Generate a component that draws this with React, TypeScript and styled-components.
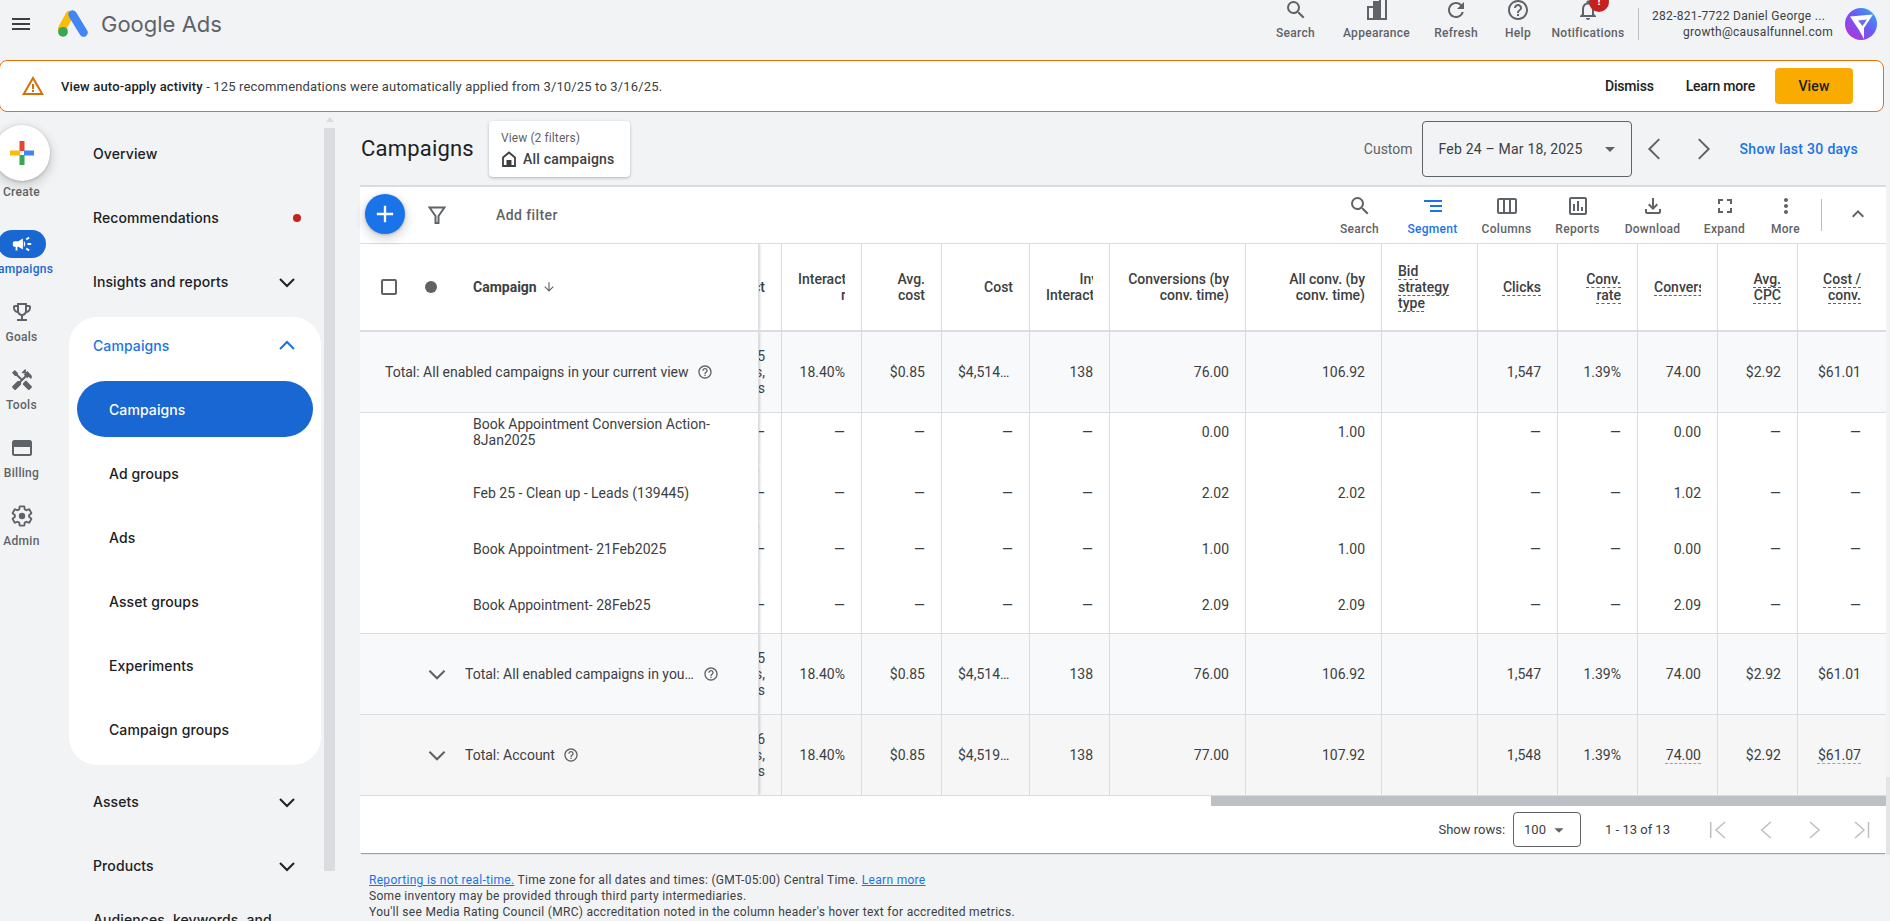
import React from "react";
import styled, { createGlobalStyle } from "styled-components";
import {
  MdMenu, MdSearch, MdRefresh, MdHelpOutline, MdNotificationsNone, MdWarningAmber, MdCampaign,
  MdOutlineEmojiEvents, MdHandyman, MdArrowDropDown, MdAdd,
  MdSegment, MdOutlineViewWeek, MdOutlineAssessment, MdOutlineFileDownload, MdFullscreen, MdMoreVert,
  MdKeyboardArrowUp, MdArrowDownward,
} from "react-icons/md";

const Global = createGlobalStyle`
  html, body { margin: 0; padding: 0; background: #f1f3f4; overflow: hidden; }
  body { font-family: Roboto, "Liberation Sans", sans-serif; color: #3c4043; }
  * { box-sizing: border-box; }
`;

const Page = styled.div`
  position: relative;
  width: 1890px;
  height: 921px;
  overflow: hidden;
  display: flex;
  flex-direction: column;
`;
const PageScrollThumb = styled.div`
  position: absolute;
  right: 0;
  top: 777px;
  width: 4px;
  height: 78px;
  background: #e3e5e8;
`;

/* ---- top bar ---- */
const TopBar = styled.header`
  height: 60px;
  flex: none;
  display: flex;
  padding-left: 9px;
  color: #5f6368;
`;
const Burger = styled.div`
  height: 48px;
  display: flex;
  align-items: center;
  color: #3c4043;
`;
const Logo = styled.svg`
  margin: 10px 0 0 25px;
  width: 30px;
  height: 27px;
`;
const Brand = styled.div`
  margin-left: 13px;
  height: 48px;
  font: 400 22px/48px Inter, Roboto, sans-serif;
  color: #5f6368;
`;
const TopActions = styled.div`
  margin-left: auto;
  margin-top: -2px;
  display: flex;
`;
const TopAction = styled.div<{ $w: number }>`
  position: relative;
  width: ${(p) => p.$w}px;
  display: flex;
  flex-direction: column;
  align-items: center;
  color: #5f6368;
`;
const TopLabel = styled.span`
  margin-top: 3px;
  font-size: 12px;
  font-weight: 500;
  line-height: 16px;
  letter-spacing: 0.3px;
`;
const Badge = styled.span`
  position: absolute;
  left: 46px;
  top: -6px;
  width: 20px;
  height: 20px;
  border-radius: 50%;
  background: #c5221f;
  color: #fff;
  font-size: 11px;
  font-weight: 700;
  text-align: center;
  line-height: 20px;
`;
const VDivider = styled.div<{ $h: number }>`
  width: 1px;
  height: ${(p) => p.$h}px;
  background: #bdc1c6;
  flex: none;
`;
const TopDivider = styled(VDivider)`
  margin: 8px 0 0 5px;
`;
const Account = styled.div`
  margin-left: 13px;
  width: 181px;
  padding-top: 8px;
  font-size: 12px;
  line-height: 16px;
  letter-spacing: 0.3px;
  white-space: nowrap;
  text-align: right;
  color: #3c4043;
`;
const AccountName = styled.div`
  padding-right: 9px;
`;
const Avatar = styled.svg`
  margin: 8px 13px 0 12px;
  width: 32px;
  height: 32px;
  flex: none;
`;

/* ---- banner ---- */
const Banner = styled.section`
  flex: none;
  width: 1885px;
  margin-left: -1px;
  height: 52px;
  background: #fff;
  border: 1px solid #e8710a;
  border-radius: 8px;
  display: flex;
  align-items: center;
  padding: 0 30px 0 21px;
  font-size: 13px;
  letter-spacing: 0.15px;
  color: #3c4043;
`;
const BannerIcon = styled.span`
  display: flex;
  color: #d56e0c;
  margin-right: 16px;
`;
const BannerText = styled.span`
  b { font-weight: 500; color: #202124; }
`;
const BannerBtn = styled.span`
  font-size: 14px;
  font-weight: 500;
  letter-spacing: -0.2px;
  color: #202124;
`;
const BannerActions = styled.div`
  margin-left: auto;
  display: flex;
  align-items: center;
  gap: 32px;
`;
const ViewBtn = styled.span`
  width: 78px;
  height: 36px;
  margin-left: -12px;
  border-radius: 4px;
  background: #f9ab00;
  display: flex;
  align-items: center;
  justify-content: center;
  font-size: 14px;
  font-weight: 500;
  color: #202124;
`;

/* ---- body ---- */
const Body = styled.div`
  display: flex;
  flex: 1;
  min-height: 0;
`;
const Rail = styled.nav`
  width: 43px;
  flex: none;
  padding-top: 13px;
  display: flex;
  flex-direction: column;
  align-items: center;
`;
const CreateBtn = styled.div`
  width: 56px;
  height: 56px;
  flex: none;
  border-radius: 50%;
  background: #fff;
  box-shadow: 0 1px 3px rgba(60, 64, 67, 0.3), 0 4px 8px 3px rgba(60, 64, 67, 0.15);
  display: flex;
  align-items: center;
  justify-content: center;
`;
const RailLabel = styled.span<{ $active?: boolean }>`
  font-size: 12px;
  line-height: 16px;
  font-weight: 500;
  letter-spacing: 0.3px;
  white-space: nowrap;
  color: ${(p) => (p.$active ? "#1967d2" : "#5f6368")};
`;
const CreateLabel = styled(RailLabel)`
  margin: 3px 0 30px;
`;
const RailItem = styled.div`
  display: flex;
  flex-direction: column;
  align-items: center;
  height: 68px;
  flex: none;
`;
const RailIcon = styled.div<{ $active?: boolean }>`
  width: 48px;
  height: 28px;
  margin-bottom: 3px;
  flex: none;
  border-radius: 14px;
  display: flex;
  align-items: center;
  justify-content: center;
  color: ${(p) => (p.$active ? "#fff" : "#5f6368")};
  background: ${(p) => (p.$active ? "#1967d2" : "transparent")};
`;
const SecNav = styled.nav`
  margin-left: 26px;
  width: 252px;
  flex: none;
  padding-top: 13px;
  display: flex;
  flex-direction: column;
  gap: 8px;
`;
const NavItem = styled.div<{ $sub?: boolean; $active?: boolean; $blue?: boolean }>`
  height: 56px;
  flex: none;
  display: flex;
  align-items: center;
  justify-content: space-between;
  padding: 1px 22px 0 ${(p) => (p.$sub ? "32px" : "24px")};
  border-radius: 28px;
  font: 500 14px/20px Inter, Roboto, sans-serif;
  letter-spacing: 0.1px;
  color: ${(p) => (p.$active ? "#fff" : p.$blue ? "#1a73e8" : "#202124")};
  background: ${(p) => (p.$active ? "#1967d2" : "transparent")};
`;
const NavCard = styled.div`
  background: #fff;
  border-radius: 28px;
  padding-bottom: 8px;
  display: flex;
  flex-direction: column;
  gap: 8px;
  flex: none;
`;
const NavSubList = styled.div`
  display: flex;
  flex-direction: column;
  gap: 8px;
  padding: 0 8px;
`;
const RedDot = styled.span`
  width: 8px;
  height: 8px;
  border-radius: 50%;
  background: #c5221f;
  margin-right: -2px;
`;
const NavScroll = styled.div`
  margin-left: 3px;
  width: 11px;
  flex: none;
  padding-top: 5px;
  display: flex;
  flex-direction: column;
  align-items: center;
`;
const NavArrow = styled.div`
  width: 0;
  height: 0;
  border-left: 4px solid transparent;
  border-right: 4px solid transparent;
  border-bottom: 5px solid #dadce0;
`;
const NavThumb = styled.div`
  margin-top: 6px;
  width: 11px;
  height: 743px;
  background: #dadce0;
`;

/* ---- main ---- */
const Main = styled.main`
  margin-left: 25px;
  width: 1526px;
  flex: none;
`;
const MainHead = styled.div`
  height: 73px;
  padding-top: 9px;
  display: flex;
  align-items: flex-start;
`;
const Title = styled.h1`
  margin: 0 0 0 1px;
  width: 112px;
  height: 56px;
  line-height: 56px;
  font-size: 22px;
  letter-spacing: 0.2px;
  font-weight: 400;
  white-space: nowrap;
  color: #202124;
`;
const ViewCard = styled.div`
  margin-left: 16px;
  width: 141px;
  height: 56px;
  padding: 9px 12px;
  background: #fff;
  border-radius: 4px;
  box-shadow: 0 1px 3px rgba(60, 64, 67, 0.35);
`;
const ViewCardTop = styled.div`
  font-size: 12px;
  line-height: 16px;
  letter-spacing: 0.1px;
  color: #5f6368;
`;
const ViewCardBottom = styled.div`
  margin-top: 4px;
  display: flex;
  align-items: center;
  gap: 6px;
  font-size: 14px;
  line-height: 18px;
  letter-spacing: 0.2px;
  font-weight: 500;
  color: #3c4043;
`;
const DateArea = styled.div`
  margin-left: auto;
  display: flex;
  align-items: center;
  height: 56px;
`;
const Custom = styled.span`
  font-size: 14px;
  color: #5f6368;
`;
const DateBox = styled.div`
  margin-left: 9px;
  width: 210px;
  height: 56px;
  border: 1px solid #5f6368;
  border-radius: 4px;
  display: flex;
  align-items: center;
  justify-content: space-between;
  padding: 0 9px 0 16px;
  font-size: 14px;
  letter-spacing: 0.2px;
  color: #3c4043;
`;
const NavBtn = styled.div`
  width: 48px;
  display: flex;
  justify-content: center;
  color: #5f6368;
`;
const DatePager = styled.div`
  display: flex;
  margin: 0 1px 0 -1px;
`;
const ShowLast = styled.span`
  margin: 0 28px 0 12px;
  font-size: 14px;
  font-weight: 500;
  letter-spacing: 0.3px;
  color: #1a73e8;
`;

const Card = styled.section`
  background: #fff;
  border-top: 2px solid #dadce0;
  box-shadow: 0 2px 1px -1px rgba(60, 64, 67, 0.45);
`;
const Toolbar = styled.div`
  height: 57px;
  border-bottom: 1px solid #dadce0;
  display: flex;
  align-items: flex-start;
  padding-left: 5px;
`;
const Fab = styled.div`
  margin-top: 7px;
  width: 40px;
  height: 40px;
  position: relative;
  z-index: 2;
  border-radius: 50%;
  background: #1a73e8;
  color: #fff;
  display: flex;
  align-items: center;
  justify-content: center;
  box-shadow: 0 1px 3px rgba(60, 64, 67, 0.3), 0 4px 8px 3px rgba(60, 64, 67, 0.15);
`;
const FilterSvg = styled.svg`
  margin: 19px 0 0 23px;
  width: 18px;
  height: 18px;
`;
const AddFilter = styled.span`
  margin: 19px 0 0 50px;
  font-size: 14px;
  line-height: 18px;
  letter-spacing: 0.4px;
  font-weight: 500;
  color: #5f6368;
`;
const ToolActions = styled.div`
  margin-left: auto;
  display: flex;
  padding-top: 7px;
`;
const ToolAction = styled.div<{ $w: number; $on?: boolean }>`
  width: ${(p) => p.$w}px;
  display: flex;
  flex-direction: column;
  align-items: center;
  color: ${(p) => (p.$on ? "#1a73e8" : "#5f6368")};
`;
const ToolLabel = styled.span`
  margin-top: 3px;
  font-size: 12px;
  line-height: 16px;
  letter-spacing: 0.3px;
  font-weight: 500;
`;
const ToolDivider = styled(VDivider)`
  margin: 12px 0 0 9px;
`;
const Collapse = styled.div`
  margin: 15px 16px 0 24px;
  display: flex;
  color: #5f6368;
`;

/* ---- table ---- */
const COLS = "399px 23px 80px 80px 88px 80px 136px 136px 96px 80px 80px 80px 80px 88px";

const Cell = styled.div<{ $left?: boolean }>`
  min-width: 0;
  display: flex;
  align-items: center;
  justify-content: ${(p) => (p.$left ? "flex-start" : "flex-end")};
  padding: 0 16px;
  border-right: 1px solid #dadce0;
  font-size: 14px;
  line-height: 16px;
  color: #3c4043;
  white-space: nowrap;
  &:last-child { border-right: 0; padding-right: 25px; }
`;
/* the column that has scrolled under the frozen pane: only its right edge shows */
const EdgeCell = styled(Cell)`
  padding-left: 0;
`;
const Row = styled.div<{ $h: number; $bg?: string; $line?: number; $lift?: number }>`
  display: grid;
  grid-template-columns: ${COLS};
  height: ${(p) => p.$h + (p.$line || 0)}px;
  background: ${(p) => p.$bg || "#fff"};
  border-bottom: ${(p) => p.$line || 0}px solid #dadce0;
  & > * { padding-bottom: ${(p) => p.$lift || 0}px; }
`;
const Frozen = styled.div<{ $pl: number; $pr?: number; $gap?: number }>`
  position: relative;
  z-index: 1;
  background: inherit;
  min-width: 0;
  display: flex;
  align-items: center;
  gap: ${(p) => p.$gap || 0}px;
  padding-left: ${(p) => p.$pl}px;
  padding-right: ${(p) => p.$pr || 0}px;
  border-right: 1px solid #dadce0;
  box-shadow: 1px 0 2px rgba(60, 64, 67, 0.22);
  clip-path: inset(0 -4px 0 0);
  font-size: 14px;
  line-height: 16px;
  color: #3c4043;
`;
const HeadRow = styled(Row)`
  ${Cell} { font-weight: 500; }
  ${Frozen} { font-weight: 500; }
`;
const Check = styled.span`
  width: 16px;
  height: 16px;
  border: 2px solid #5f6368;
  border-radius: 2px;
  flex: none;
`;
const Dot = styled.span`
  margin-left: 28px;
  width: 12px;
  height: 12px;
  border-radius: 50%;
  background: #5f6368;
  flex: none;
`;
const HeadName = styled.span`
  margin-left: 36px;
  display: flex;
  align-items: center;
  gap: 5px;
  font-weight: 700;
  color: #3c4043;
`;
const Lines = styled.div`
  text-align: right;
`;
const LeftLines = styled.div`
  text-align: left;
`;
const ClipBox = styled.div`
  width: 100%;
  overflow: hidden;
  padding-bottom: 4px;
  margin-bottom: -4px;
`;
const ClipInner = styled.div`
  width: max-content;
  text-align: right;
`;
const Dashed = styled.span<{ $soft?: boolean }>`
  text-decoration: underline dashed ${(p) => (p.$soft ? "#9aa0a6" : "#5f6368")} 1px;
  text-underline-offset: 3px;
  text-decoration-skip-ink: none;
`;
const Ellipsis = styled.div`
  width: 100%;
  overflow: hidden;
  text-overflow: ellipsis;
`;
const FooterName = styled.span`
  margin: 0 6px 0 15px;
  max-width: 232px;
  overflow: hidden;
  text-overflow: ellipsis;
  white-space: nowrap;
`;
const AccountTotal = styled(FooterName)`
  margin-right: 8px;
`;
const PlainName = styled.span`
  white-space: nowrap;
`;
const HelpIcon = styled.span`
  display: flex;
  color: #5f6368;
  flex: none;
`;
const HScroll = styled.div`
  height: 10px;
  padding-left: 851px;
`;
const HThumb = styled.div`
  height: 10px;
  background: #bdc1c6;
`;
const Footer = styled.div`
  height: 47px;
  display: flex;
  align-items: center;
  justify-content: flex-end;
  font-size: 13px;
  color: #3c4043;
`;
const RowsSelect = styled.div`
  margin-left: 8px;
  width: 68px;
  height: 35px;
  border: 1px solid #5f6368;
  border-radius: 4px;
  padding-left: 10px;
  display: flex;
  align-items: center;
  gap: 2px;
`;
const Range = styled.span`
  margin: 0 24px 0 24px;
`;
const PagerBtn = styled.div`
  width: 48px;
  display: flex;
  justify-content: center;
`;
const Notes = styled.div`
  margin-top: 19px;
  padding-left: 9px;
  font-size: 12px;
  line-height: 16px;
  letter-spacing: 0.3px;
  color: #3c4043;
  white-space: nowrap;
  a { color: #1a73e8; text-decoration: underline; }
`;

/* ---- drawings ---- */
const ROT: Record<string, number> = { down: 0, up: 180, left: 90, right: -90 };
const ChevSvg = styled.svg<{ $dir: string }>`
  flex: none;
  transform: rotate(${(p) => ROT[p.$dir]}deg);
`;
const Chev = ({ dir = "down", size = 24, w = 2, color = "currentColor" }: { dir?: string; size?: number; w?: number; color?: string }) => (
  <ChevSvg $dir={dir} width={size} height={size} viewBox="0 0 24 24">
    <polyline points="5,9 12,16 19,9" fill="none" stroke={color} strokeWidth={w} />
  </ChevSvg>
);
const Help = () => (
  <HelpIcon><MdHelpOutline size={16} /></HelpIcon>
);
const PagerIcon = ({ d, bar }: { d: string; bar?: string }) => (
  <svg width="18" height="20" viewBox="0 0 18 20" fill="none" stroke="#bdc1c6" strokeWidth="1.6">
    <polyline points={d} />
    {bar && <line x1={bar} x2={bar} y1="2" y2="18" />}
  </svg>
);
const BillingIcon = () => (
  <svg width="24" height="24" viewBox="0 0 24 24">
    <rect x="3" y="5" width="18" height="14" rx="1.5" fill="none" stroke="currentColor" strokeWidth="2" />
    <rect x="3" y="6" width="18" height="5" fill="currentColor" />
  </svg>
);
const AdminIcon = () => (
  <svg width="24" height="24" viewBox="0 0 24 24">
    <path
      d="M19.14 12.94c.04-.3.06-.61.06-.94 0-.32-.02-.64-.07-.94l2.03-1.58a.49.49 0 0 0 .12-.61l-1.92-3.32a.488.488 0 0 0-.59-.22l-2.39.96c-.5-.38-1.03-.7-1.62-.94l-.36-2.54a.484.484 0 0 0-.48-.41h-3.84c-.24 0-.43.17-.47.41l-.36 2.54c-.59.24-1.13.57-1.62.94l-2.39-.96c-.22-.08-.47 0-.59.22L2.74 8.87c-.12.21-.08.47.12.61l2.03 1.58c-.05.3-.09.63-.09.94s.02.64.07.94l-2.03 1.58a.49.49 0 0 0-.12.61l1.92 3.32c.12.22.37.29.59.22l2.39-.96c.5.38 1.03.7 1.62.94l.36 2.54c.05.24.24.41.48.41h3.84c.24 0 .44-.17.47-.41l.36-2.54c.59-.24 1.13-.56 1.62-.94l2.39.96c.22.08.47 0 .59-.22l1.92-3.32c.12-.22.07-.47-.12-.61l-2.01-1.58z"
      fill="none"
      stroke="currentColor"
      strokeWidth="1.9"
    />
    <circle cx="12" cy="12" r="3.2" fill="currentColor" />
  </svg>
);

const D = "—";
const totals = ["18.40%", "$0.85", "$4,514.50", "138", "76.00", "106.92", "", "1,547", "1.39%", "74.00", "$2.92", "$61.01"];
const account = ["18.40%", "$0.85", "$4,519.25", "138", "77.00", "107.92", "", "1,548", "1.39%", "74.00", "$2.92", "$61.07"];
const body = [
  { name: "Book Appointment Conversion Action-8Jan2025", h: 52, lift: 14, line: 0, a: "0.00", b: "1.00", c: "0.00" },
  { name: "Feb 25 - Clean up - Leads (139445)", h: 56, lift: 0, line: 0, a: "2.02", b: "2.02", c: "1.02" },
  { name: "Book Appointment- 21Feb2025", h: 55, lift: 0, line: 0, a: "1.00", b: "1.00", c: "0.00" },
  { name: "Book Appointment- 28Feb25", h: 57, lift: 0, line: 1, a: "2.09", b: "2.09", c: "2.09" },
];

const ValueCells = ({ v, clip, soft }: { v: string[]; clip: string; soft?: boolean }) => (
  <>
    <EdgeCell><Lines>{clip}<br />s,<br />s</Lines></EdgeCell>
    {v.map((x, i) => (
      <Cell key={i}>
        {i === 2 ? <Ellipsis>{x}</Ellipsis> : soft && (i === 9 || i === 11) ? <Dashed $soft>{x}</Dashed> : x}
      </Cell>
    ))}
  </>
);

export default function App() {
  return (
    <Page>
      <Global />
      <PageScrollThumb />
      <TopBar>
        <Burger><MdMenu size={24} /></Burger>
        <Logo viewBox="0 0 30 27">
          <path d="M11.5 5 L4 18.6" stroke="#fbbc04" strokeWidth="8" strokeLinecap="round" />
          <path d="M14.5 4.5 L25.6 22.6" stroke="#4285f4" strokeWidth="8.4" strokeLinecap="round" />
          <circle cx="5" cy="21.8" r="4.9" fill="#34a853" />
        </Logo>
        <Brand>Google Ads</Brand>
        <TopActions>
          <TopAction $w={77}><MdSearch size={24} /><TopLabel>Search</TopLabel></TopAction>
          <TopAction $w={85}>
            <svg width="24" height="24" viewBox="0 0 24 24" fill="none" stroke="#5f6368" strokeWidth="2">
              <rect x="3" y="9" width="6" height="12" />
              <rect x="9" y="4" width="6" height="17" fill="#5f6368" />
              <rect x="15" y="1" width="6" height="20" />
            </svg>
            <TopLabel>Appearance</TopLabel>
          </TopAction>
          <TopAction $w={74}><MdRefresh size={24} /><TopLabel>Refresh</TopLabel></TopAction>
          <TopAction $w={50}><MdHelpOutline size={24} /><TopLabel>Help</TopLabel></TopAction>
          <TopAction $w={90}>
            <MdNotificationsNone size={24} />
            <Badge>!</Badge>
            <TopLabel>Notifications</TopLabel>
          </TopAction>
        </TopActions>
        <TopDivider $h={32} />
        <Account>
          <AccountName>282-821-7722 Daniel George ...</AccountName>
          <div>growth@causalfunnel.com</div>
        </Account>
        <Avatar viewBox="0 0 32 32">
          <defs>
            <linearGradient id="av" x1="0" y1="1" x2="1" y2="0">
              <stop offset="0" stopColor="#c02bd6" />
              <stop offset="0.55" stopColor="#6a5cf2" />
              <stop offset="1" stopColor="#27b4f5" />
            </linearGradient>
          </defs>
          <circle cx="16" cy="16" r="16" fill="url(#av)" />
          <path d="M5 8.5 L28 6.5 L19 20 L19 31 L14 22 Z" fill="#fff" />
          <path d="M13 12.5 L22 11.5 L17.5 18 Z" fill="#6f6cf2" />
        </Avatar>
      </TopBar>

      <Banner>
        <BannerIcon><MdWarningAmber size={24} /></BannerIcon>
        <BannerText><b>View auto-apply activity</b> - 125 recommendations were automatically applied from 3/10/25 to 3/16/25.</BannerText>
        <BannerActions>
          <BannerBtn>Dismiss</BannerBtn>
          <BannerBtn>Learn more</BannerBtn>
          <ViewBtn>View</ViewBtn>
        </BannerActions>
      </Banner>

      <Body>
        <Rail>
          <CreateBtn>
            <svg width="24" height="24" viewBox="0 0 24 24">
              <rect x="9.5" y="0" width="5" height="10" fill="#ea4335" />
              <rect x="14" y="9.5" width="10" height="5" fill="#4285f4" />
              <rect x="9.5" y="14" width="5" height="10" fill="#34a853" />
              <rect x="0" y="9.5" width="10" height="5" fill="#fbbc04" />
            </svg>
          </CreateBtn>
          <CreateLabel>Create</CreateLabel>
          <RailItem>
            <RailIcon $active><MdCampaign size={22} /></RailIcon>
            <RailLabel $active>Campaigns</RailLabel>
          </RailItem>
          <RailItem><RailIcon><MdOutlineEmojiEvents size={24} /></RailIcon><RailLabel>Goals</RailLabel></RailItem>
          <RailItem><RailIcon><MdHandyman size={24} /></RailIcon><RailLabel>Tools</RailLabel></RailItem>
          <RailItem><RailIcon><BillingIcon /></RailIcon><RailLabel>Billing</RailLabel></RailItem>
          <RailItem><RailIcon><AdminIcon /></RailIcon><RailLabel>Admin</RailLabel></RailItem>
        </Rail>

        <SecNav>
          <NavItem>Overview</NavItem>
          <NavItem>Recommendations<RedDot /></NavItem>
          <NavItem>Insights and reports<Chev /></NavItem>
          <NavCard>
            <NavItem $blue>Campaigns<Chev dir="up" /></NavItem>
            <NavSubList>
              <NavItem $sub $active>Campaigns</NavItem>
              <NavItem $sub>Ad groups</NavItem>
              <NavItem $sub>Ads</NavItem>
              <NavItem $sub>Asset groups</NavItem>
              <NavItem $sub>Experiments</NavItem>
              <NavItem $sub>Campaign groups</NavItem>
            </NavSubList>
          </NavCard>
          <NavItem>Assets<Chev /></NavItem>
          <NavItem>Products<Chev /></NavItem>
          <NavItem>Audiences, keywords, and content<Chev /></NavItem>
        </SecNav>
        <NavScroll><NavArrow /><NavThumb /></NavScroll>

        <Main>
          <MainHead>
            <Title>Campaigns</Title>
            <ViewCard>
              <ViewCardTop>View (2 filters)</ViewCardTop>
              <ViewCardBottom>
                <svg width="16" height="16" viewBox="0 0 16 16">
                  <path d="M8 1.5 L14 6.5 V15 H2 V6.5 Z" fill="none" stroke="#3c4043" strokeWidth="1.8" />
                  <rect x="5.5" y="9" width="5" height="6" fill="#3c4043" />
                </svg>
                All campaigns
              </ViewCardBottom>
            </ViewCard>
            <DateArea>
              <Custom>Custom</Custom>
              <DateBox>Feb 24 – Mar 18, 2025<MdArrowDropDown size={24} color="#5f6368" /></DateBox>
              <DatePager>
                <NavBtn><Chev dir="left" size={34} w={1.4} /></NavBtn>
                <NavBtn><Chev dir="right" size={34} w={1.4} /></NavBtn>
              </DatePager>
              <ShowLast>Show last 30 days</ShowLast>
            </DateArea>
          </MainHead>

          <Card>
            <Toolbar>
              <Fab><MdAdd size={28} /></Fab>
              <FilterSvg viewBox="0 0 18 18">
                <path d="M1.5 1.5 H16.5 L10.5 10 V17 H7.5 V10 Z" fill="none" stroke="#5f6368" strokeWidth="2" />
              </FilterSvg>
              <AddFilter>Add filter</AddFilter>
              <ToolActions>
                <ToolAction $w={65}><MdSearch size={24} /><ToolLabel>Search</ToolLabel></ToolAction>
                <ToolAction $w={81} $on><MdSegment size={24} /><ToolLabel>Segment</ToolLabel></ToolAction>
                <ToolAction $w={67}><MdOutlineViewWeek size={24} /><ToolLabel>Columns</ToolLabel></ToolAction>
                <ToolAction $w={75}><MdOutlineAssessment size={24} /><ToolLabel>Reports</ToolLabel></ToolAction>
                <ToolAction $w={75}><MdOutlineFileDownload size={24} /><ToolLabel>Download</ToolLabel></ToolAction>
                <ToolAction $w={69}><MdFullscreen size={24} /><ToolLabel>Expand</ToolLabel></ToolAction>
                <ToolAction $w={53}><MdMoreVert size={24} /><ToolLabel>More</ToolLabel></ToolAction>
              </ToolActions>
              <ToolDivider $h={32} />
              <Collapse><MdKeyboardArrowUp size={24} /></Collapse>
            </Toolbar>

            <HeadRow $h={86} $line={2}>
              <Frozen $pl={21}>
                <Check /><Dot />
                <HeadName>Campaign <MdArrowDownward size={14} color="#5f6368" /></HeadName>
              </Frozen>
              <EdgeCell><span>ct</span></EdgeCell>
              <Cell><ClipBox><ClipInner>Interaction<br />rate</ClipInner></ClipBox></Cell>
              <Cell><Lines>Avg.<br />cost</Lines></Cell>
              <Cell>Cost</Cell>
              <Cell><ClipBox><ClipInner>Invalid<br />Interactions</ClipInner></ClipBox></Cell>
              <Cell><Lines>Conversions (by<br />conv. time)</Lines></Cell>
              <Cell><Lines>All conv. (by<br />conv. time)</Lines></Cell>
              <Cell $left><LeftLines><Dashed>Bid</Dashed><br /><Dashed>strategy</Dashed><br /><Dashed>type</Dashed></LeftLines></Cell>
              <Cell><Dashed>Clicks</Dashed></Cell>
              <Cell><Lines><Dashed>Conv.</Dashed><br /><Dashed>rate</Dashed></Lines></Cell>
              <Cell><ClipBox><ClipInner><Dashed>Conversions</Dashed></ClipInner></ClipBox></Cell>
              <Cell><Lines><Dashed>Avg.</Dashed><br /><Dashed>CPC</Dashed></Lines></Cell>
              <Cell><Lines><Dashed>Cost /</Dashed><br /><Dashed>conv.</Dashed></Lines></Cell>
            </HeadRow>

            <Row $h={80} $line={1} $bg="#f8f9fa">
              <Frozen $pl={25} $gap={8}><PlainName>Total: All enabled campaigns in your current view</PlainName><Help /></Frozen>
              <ValueCells v={totals} clip="5" />
            </Row>

            {body.map((r) => (
              <Row key={r.name} $h={r.h} $lift={r.lift} $line={r.line}>
                <Frozen $pl={113} $pr={20}>{r.name}</Frozen>
                <EdgeCell>{D}</EdgeCell>
                <Cell>{D}</Cell><Cell>{D}</Cell><Cell>{D}</Cell><Cell>{D}</Cell>
                <Cell>{r.a}</Cell><Cell>{r.b}</Cell><Cell />
                <Cell>{D}</Cell><Cell>{D}</Cell><Cell>{r.c}</Cell><Cell>{D}</Cell><Cell>{D}</Cell>
              </Row>
            ))}

            <Row $h={80} $line={1} $bg="#f8f9fa">
              <Frozen $pl={64}>
                <Chev size={26} w={1.9} color="#5f6368" />
                <FooterName>Total: All enabled campaigns in your current view</FooterName>
                <Help />
              </Frozen>
              <ValueCells v={totals} clip="5" />
            </Row>
            <Row $h={80} $line={1} $bg="#f6f6f6">
              <Frozen $pl={64}>
                <Chev size={26} w={1.9} color="#5f6368" />
                <AccountTotal>Total: Account</AccountTotal>
                <Help />
              </Frozen>
              <ValueCells v={account} clip="6" soft />
            </Row>

            <HScroll><HThumb /></HScroll>
            <Footer>
              <span>Show rows:</span>
              <RowsSelect>100<MdArrowDropDown size={22} color="#5f6368" /></RowsSelect>
              <Range>1 - 13 of 13</Range>
              <PagerBtn><PagerIcon d="16,2 7,10 16,18" bar="1.7" /></PagerBtn>
              <PagerBtn><PagerIcon d="13.7,2 4.7,10 13.7,18" /></PagerBtn>
              <PagerBtn><PagerIcon d="5,2 14,10 5,18" /></PagerBtn>
              <PagerBtn><PagerIcon d="2,2 11,10 2,18" bar="15.5" /></PagerBtn>
            </Footer>
          </Card>

          <Notes>
            <div><a>Reporting is not real-time.</a> Time zone for all dates and times: (GMT-05:00) Central Time. <a>Learn more</a></div>
            <div>Some inventory may be provided through third party intermediaries.</div>
            <div>You'll see Media Rating Council (MRC) accreditation noted in the column header's hover text for accredited metrics.</div>
          </Notes>
        </Main>
      </Body>
    </Page>
  );
}
